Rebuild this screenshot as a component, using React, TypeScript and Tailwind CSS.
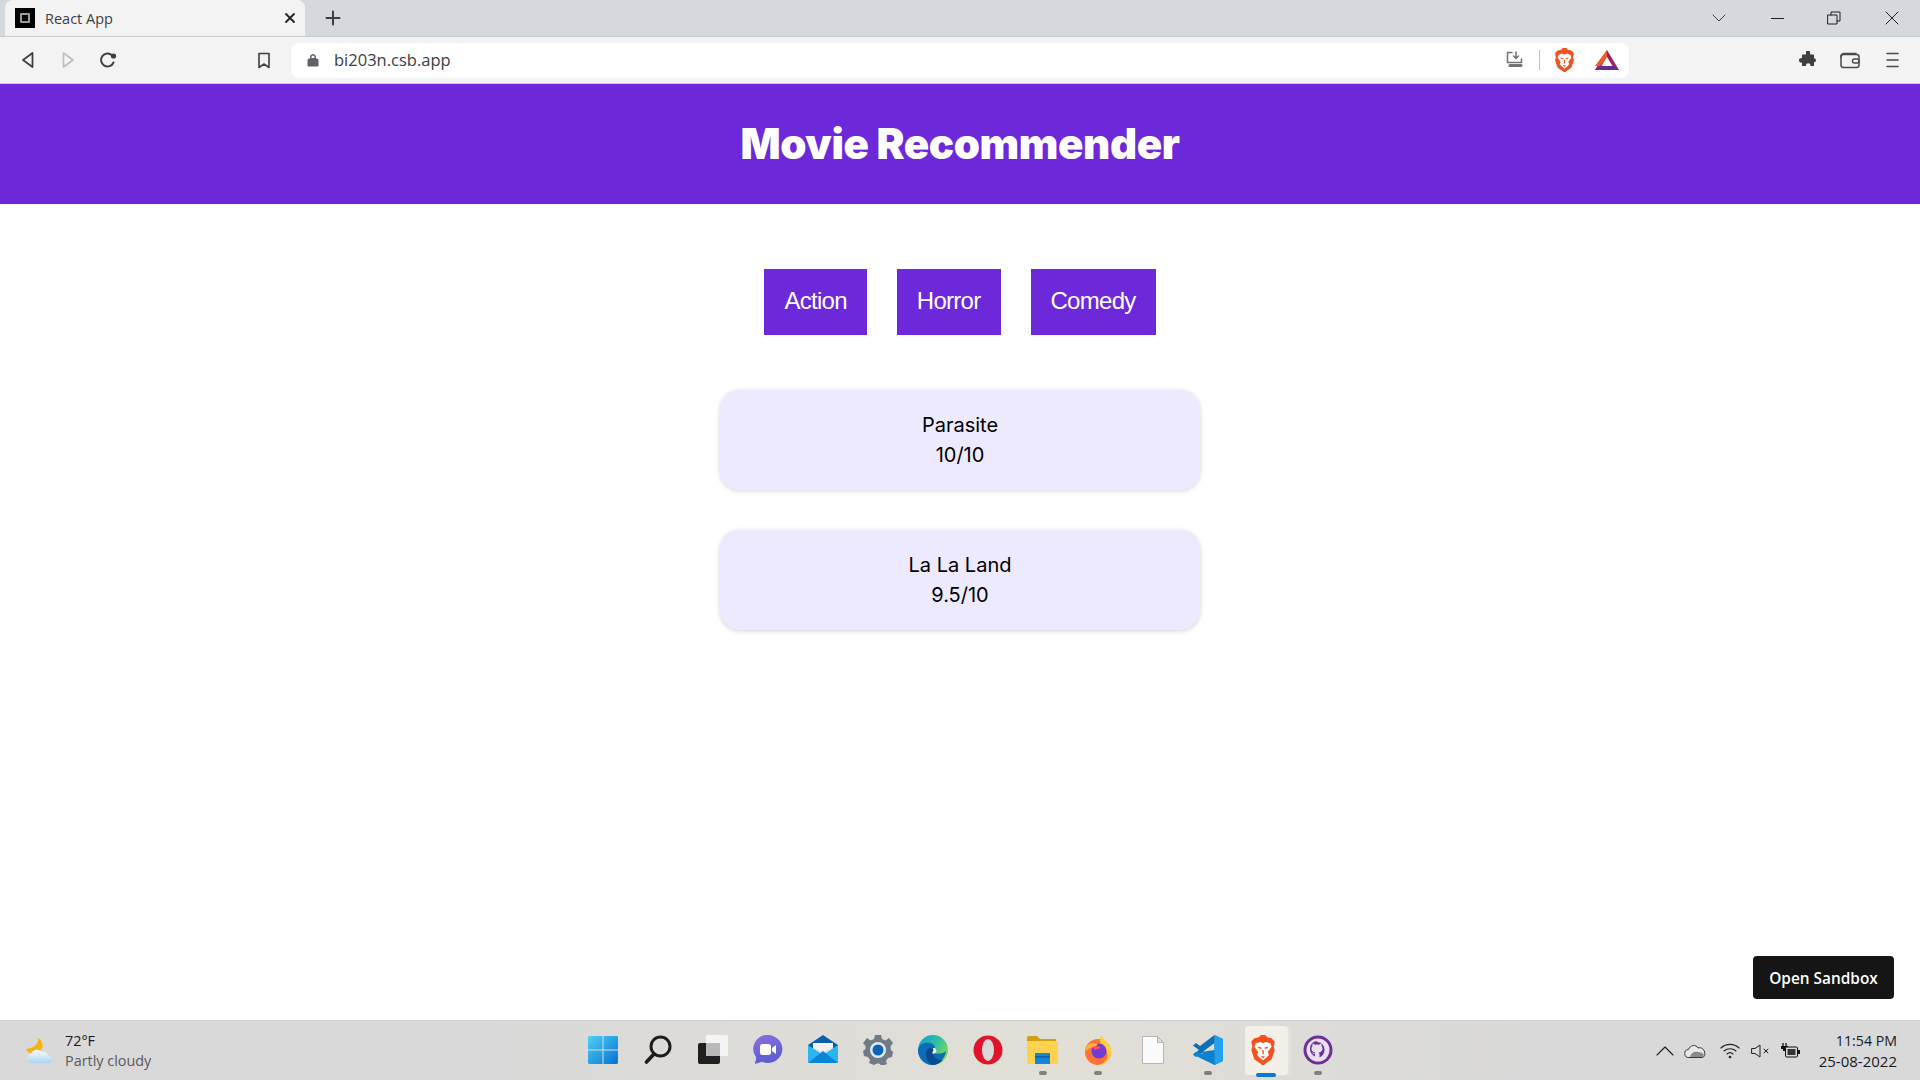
import type { ReactNode } from "react";

const purple = "bg-[#6d28d9]";

// Toolbar / taskbar icons are drawn by hand, the packages have none of these brand marks
function BraveLogo({ size }: { size: number }) {
  return (
    <svg width={size} height={size * 1.15} viewBox="0 0 24 28">
      <path d="M4 3l4-1 2-2h4l2 2 4 1 3 3-1 5 1 3-3 9-6 4-1 1h-2l-1-1-6-4-3-9 1-3-1-5z" fill="#f4511e" />
      <path d="M5 8l4-1.500 3 1 3-1L19 8l1 3-3.500 5 1 3L12 24l-5.500-5 1-3L4 11z" fill="#fff" />
      <path d="M10 20h4l-2 2z" fill="#f4511e" />
      <path d="M7.500 11.500l3 1M16.500 11.500l-3 1M12 14v4" stroke="#f4511e" strokeWidth="1.3" />
    </svg>
  );
}

function Triangle() {
  return (
    <svg width="24" height="20" viewBox="0 0 24 20">
      <path d="M12 0l12 20H0z" fill="#9e1f63" />
      <path d="M12 0v9l-7 7H0z" fill="#f15a24" />
      <path d="M5 16h14l5 4H0z" fill="#662d91" />
      <path d="M12 7l5.500 9h-11z" fill="#fff" />
    </svg>
  );
}

function ChromeStroke({ children, w = 20, h = 20, box = "0 0 20 20", color = "#3c4043", sw = 1.6 }: { children: ReactNode; w?: number; h?: number; box?: string; color?: string; sw?: number }) {
  return (
    <svg width={w} height={h} viewBox={box} fill="none" stroke={color} strokeWidth={sw} strokeLinecap="round" strokeLinejoin="round">
      {children}
    </svg>
  );
}

function BrowserChrome() {
  return (
    <div className="shrink-0 font-['Open_Sans',sans-serif]">
      {/* tab strip */}
      <div className="flex h-[37px] items-end border-b border-[#c9ccd0] bg-[#d5d8dc] pl-[5px]">
        <div className="flex h-[36px] w-[300px] items-center rounded-t-lg bg-[#f3f3f3] pl-[10px] pr-[8px]">
          <div className="flex h-5 w-5 items-center justify-center bg-black">
            <div className="h-[10px] w-[10px] rounded-[1px] border-2 border-[#9a9a9a]" />
          </div>
          <span className="ml-[10px] flex-1 pt-[2px] text-[14.5px] text-[#3c4043]">React App</span>
          <ChromeStroke w={14} h={14} box="0 0 14 14" color="#202124" sw={1.8}>
            <path d="M3 3l8 8M11 3l-8 8" />
          </ChromeStroke>
        </div>
        <div className="flex h-[36px] items-center pl-[20px]">
          <ChromeStroke w={16} h={16} box="0 0 16 16" sw={2}>
            <path d="M8 1.500v13M1.500 8h13" />
          </ChromeStroke>
        </div>
        <div className="ml-auto flex h-[36px] items-center">
          <div className="flex w-[50px] justify-center">
            <ChromeStroke w={14} h={8} box="0 0 14 8" sw={1}>
              <path d="M1 1l6 6 6-6" />
            </ChromeStroke>
          </div>
          <div className="ml-[27px] h-px w-[13px] bg-[#202124]" />
          <div className="ml-[43px]">
            <ChromeStroke w={14} h={14} box="0 0 14 14" color="#202124" sw={1}>
              <path d="M1 4h9v9H1zM4 4V1h9v9h-3" />
            </ChromeStroke>
          </div>
          <div className="ml-[44px] mr-[21px]">
            <ChromeStroke w={14} h={14} box="0 0 14 14" color="#202124" sw={1}>
              <path d="M1 1l12 12M13 1L1 13" />
            </ChromeStroke>
          </div>
        </div>
      </div>
      {/* address row */}
      <div className="flex h-[47px] items-center border-b border-[#d0d0d0] bg-[#f3f3f3]">
        <div className="flex w-[291px] items-center pl-[20px]">
          <ChromeStroke w={16} h={18} box="0 0 16 18" sw={1.8}>
            <path d="M12.500 2L3 9l9.500 7z" />
          </ChromeStroke>
          <div className="ml-[24px]">
            <ChromeStroke w={16} h={18} box="0 0 16 18" color="#bdbdbd" sw={1.6}>
              <path d="M3.500 2L13 9l-9.500 7z" />
            </ChromeStroke>
          </div>
          <div className="ml-[22px]">
            <ChromeStroke w={20} h={20} box="0 0 20 20" sw={2}>
              <path d="M15.500 12.500A6.500 6.500 0 1 1 14 5.200" />
              <circle cx="15.500" cy="6" r="1.600" fill="#3c4043" />
            </ChromeStroke>
          </div>
          <div className="ml-auto mr-[20px]">
            <ChromeStroke w={14} h={17} box="0 0 14 17" sw={1.6}>
              <path d="M2 1.500h10v14l-5-3.500-5 3.500z" />
            </ChromeStroke>
          </div>
        </div>
        <div className="flex h-[35px] w-[1338px] items-center rounded-lg bg-white pl-[16px] pr-[10px]">
          <svg width="12" height="14" viewBox="0 0 12 14">
            <path d="M2 6h8a1 1 0 0 1 1 1v6H1V7a1 1 0 0 1 1-1zM3.500 6V4a2.500 2.500 0 0 1 5 0v2" fill="#5f6368" stroke="#5f6368" />
            <path d="M4.500 5V4a1.500 1.500 0 0 1 3 0v1z" fill="#fff" />
          </svg>
          <span className="ml-[15px] flex-1 text-[16.5px] text-[#3c4043]">bi203n.csb.app</span>
          <ChromeStroke w={19} h={18} box="0 0 19 18" color="#6f7276" sw={1.5}>
            <path d="M6 1.500H1.500v10h14V8M10 1v6M7.500 5L10 7.500 12.500 5" />
            <path d="M4 14.500h11" strokeWidth="3" />
          </ChromeStroke>
          <div className="ml-[14px] mr-[14px] h-[20px] w-px bg-[#c4c4c4]" />
          <BraveLogo size={21} />
          <div className="ml-[20px]">
            <Triangle />
          </div>
        </div>
        <div className="flex flex-1 items-center pl-[170px]">
          <svg width="18" height="18" viewBox="0 0 18 18">
            <path d="M7 1a2 2 0 0 1 4 0l.3 2.500H15v3.700a2 2 0 1 1 0 4V15h-3.600a2.200 2.200 0 1 0-4.300 0H3v-3.500a2.300 2.300 0 1 1 0-4.300V3.500h4z" fill="#3c4043" />
          </svg>
          <div className="ml-[23px]">
            <ChromeStroke w={20} h={17} box="0 0 20 17" color="#4a4a4a" sw={1.5}>
              <rect x="1" y="2.500" width="18" height="13" rx="2.500" />
              <path d="M1 5a3 3 0 0 1 3-3.500h12" />
              <rect x="12.500" y="7" width="6.500" height="4" rx="2" />
            </ChromeStroke>
          </div>
          <div className="ml-[26px]">
            <ChromeStroke w={13} h={16} box="0 0 13 16" color="#4a4a4a" sw={1.5}>
              <path d="M1 1.500h11M1 8h11M1 14.500h11" />
            </ChromeStroke>
          </div>
        </div>
      </div>
    </div>
  );
}

const movies = [
  { name: "Parasite", rating: "10/10" },
  { name: "La La Land", rating: "9.5/10" },
];

function Recommender() {
  return (
    <div className="relative flex-1 bg-white text-black">
      <header className={`flex h-[120px] items-center justify-center ${purple}`}>
        <h1 className="font-['Inter',sans-serif] text-[42px] leading-[60px] font-black tracking-[-0.4px] text-white">
          Movie Recommender
        </h1>
      </header>

      <div className="mt-[65px] flex justify-center gap-[30px]">
        {["Action", "Horror", "Comedy"].map((genre) => (
          <button
            key={genre}
            className={`h-[66px] px-[20px] pb-[2px] font-['Liberation_Sans',sans-serif] text-[24px] tracking-[-0.72px] text-white ${purple}`}
          >
            {genre}
          </button>
        ))}
      </div>

      <div className="mt-[55px] flex flex-col items-center gap-[40px]">
        {movies.map((movie) => (
          <div
            key={movie.name}
            className="flex h-[100px] w-[480px] flex-col items-center justify-center rounded-[20px] bg-[#ede9fe] font-['Inter',sans-serif] text-[20px] leading-[30px] shadow-[0_1px_5px_rgba(0,0,0,0.18)]"
          >
            <div>{movie.name}</div>
            <div>{movie.rating}</div>
          </div>
        ))}
      </div>

      <button className="absolute right-[26px] bottom-[21px] h-[43px] w-[141px] rounded-[4px] bg-[#151515] pt-[2px] font-['Open_Sans',sans-serif] text-[15.4px] font-semibold text-white">
        Open Sandbox
      </button>
    </div>
  );
}

type TaskIcon = { id: string; running?: boolean; active?: boolean; icon: ReactNode };

const taskIcons: TaskIcon[] = [
  {
    id: "start",
    icon: (
      <svg width="30" height="30" viewBox="0 0 30 30">
        <defs>
          <linearGradient id="win" x1="0" y1="0" x2="1" y2="1">
            <stop offset="0" stopColor="#4fd0f8" />
            <stop offset="1" stopColor="#0672d0" />
          </linearGradient>
        </defs>
        <path d="M1 1h13.500v13.500H0V2zM15.500 1H29l1 1v12.500H15.500zM0 15.500h14.500V29H1l-1-1zM15.500 15.500H30V28l-1 1H15.500z" fill="url(#win)" />
      </svg>
    ),
  },
  {
    id: "search",
    icon: (
      <svg width="28" height="30" viewBox="0 0 28 30" fill="none" stroke="#1d1d1d" strokeLinecap="round">
        <circle cx="16.500" cy="11.500" r="9.500" strokeWidth="3" />
        <path d="M10 19l-7.500 8" strokeWidth="3.600" />
      </svg>
    ),
  },
  {
    id: "taskview",
    icon: (
      <svg width="30" height="30" viewBox="0 0 30 30">
        <rect x="0" y="8" width="22" height="21" rx="2" fill="#1f1f1f" />
        <rect x="8" y="0" width="22" height="21" rx="1" fill="#f4f4f4" />
        <rect x="8" y="8" width="14" height="13" fill="#b9b9b9" />
      </svg>
    ),
  },
  {
    id: "chat",
    icon: (
      <svg width="30" height="30" viewBox="0 0 30 30">
        <defs>
          <linearGradient id="chat" x1="0" y1="0" x2="0.3" y2="1">
            <stop offset="0" stopColor="#8f6ee0" />
            <stop offset="1" stopColor="#5a5fcf" />
          </linearGradient>
        </defs>
        <path d="M15 0a14.500 14 0 1 1-6 26.800L2 29l1.200-6.500A14 14 0 0 1 15 0z" fill="url(#chat)" />
        <rect x="7" y="9" width="11" height="11" rx="2.500" fill="#fff" />
        <path d="M19 13l4-3v9l-4-3z" fill="#fff" />
      </svg>
    ),
  },
  {
    id: "mail",
    icon: (
      <svg width="30" height="30" viewBox="0 0 30 30">
        <path d="M0 10L15 0l15 10v3H0z" fill="#0f5fa8" />
        <path d="M5 8h20v5L15 17 5 13z" fill="#f2f2f2" />
        <path d="M0 10l15 10 15-10v17l-1 1H1l-1-1z" fill="#29b6ee" />
        <path d="M0 28l15-12 15 12z" fill="#0a86d8" />
      </svg>
    ),
  },
  {
    id: "settings",
    icon: (
      <svg width="30" height="30" viewBox="0 0 30 30">
        <path
          d="M12 0h6l1 4 3.500 1.500L26 3l4 5-2.500 3.500.5 3.500 2 2-1 5-4 1-2 3 1 3-5 2-3-2.500h-2L11 30l-5-2 1-3-2-3-4-1-1-5 2.500-2V11L0 8l4-5 3.500 2.500L11 4z"
          fill="#6f7c88"
        />
        <circle cx="15" cy="15" r="8" fill="#e4e8ec" />
        <circle cx="15" cy="15" r="5.500" fill="#0b63b5" />
      </svg>
    ),
  },
  {
    id: "edge",
    icon: (
      <svg width="30" height="30" viewBox="0 0 30 30">
        <defs>
          <linearGradient id="edge" x1="0" y1="0" x2="1" y2="0.6">
            <stop offset="0" stopColor="#0b9bd8" />
            <stop offset="0.6" stopColor="#35c1a0" />
            <stop offset="1" stopColor="#7ed957" />
          </linearGradient>
        </defs>
        <circle cx="15" cy="15" r="15" fill="url(#edge)" />
        <path d="M0 15c1-6 7-8 12-7s7 6 3 9c3 3 10 2 13-1-1 8-7 14-14 14C6 30 0 23 0 15z" fill="#0c6cb8" />
        <path d="M8 18c0-4 4-6 7-4s2 5 0 6c2 3 5 6 10 5-3 3-7 5-11 5-4-2-6-7-6-12z" fill="#0a4a8f" />
        <path d="M15 13c3 0 4 2 3 4-1 2-3 2-4 1 1-1 2-3 1-5z" fill="#fff" />
      </svg>
    ),
  },
  {
    id: "opera",
    icon: (
      <svg width="30" height="30" viewBox="0 0 30 30">
        <circle cx="15" cy="15" r="14.500" fill="#e0132a" />
        <ellipse cx="15" cy="15" rx="6" ry="11" fill="#d9d9d9" />
      </svg>
    ),
  },
  {
    id: "files",
    running: true,
    icon: (
      <svg width="31" height="28" viewBox="0 0 31 28">
        <path d="M0 2a2 2 0 0 1 2-2h8l3 3h16v5H0z" fill="#d19f12" />
        <path d="M0 5h31v21a2 2 0 0 1-2 2H2a2 2 0 0 1-2-2z" fill="#fcd24f" />
        <path d="M8 17h15v11H8z" fill="#1387d6" />
        <path d="M8 20h15v1.500H8z" fill="#0d5ea3" />
      </svg>
    ),
  },
  {
    id: "firefox",
    running: true,
    icon: (
      <svg width="30" height="30" viewBox="0 0 30 30">
        <circle cx="15" cy="17" r="13" fill="#ff7139" />
        <path d="M18 0c2 5 9 8 10 14 2 8-4 16-13 16 8-2 11-7 9-13-1-4-6-6-7-10 0-2 0-5 1-7z" fill="#ffcd3c" />
        <circle cx="16" cy="16" r="7.500" fill="#6f3bd0" />
        <path d="M3 12c3-4 8-5 12-3l-3 3c-3 0-6 1-9 4z" fill="#ffb03c" />
        <path d="M9 12c3-2 8-1 9 1l-6 2z" fill="#ff4f5e" />
      </svg>
    ),
  },
  {
    id: "file",
    icon: (
      <svg width="22" height="28" viewBox="0 0 22 28">
        <path d="M.500.500h15l6 6v21H.500z" fill="#fbfbfb" stroke="#b5b5b5" />
        <path d="M15.500.500v6h6z" fill="#dedede" stroke="#b5b5b5" />
      </svg>
    ),
  },
  {
    id: "vscode",
    running: true,
    icon: (
      <svg width="30" height="30" viewBox="0 0 30 30">
        <path d="M21.500 0L30 4v22l-8.500 4L8 17l13.500-2z" fill="#0f7fca" />
        <path d="M21.500 0L30 4v22l-8.500 4z" fill="#22a2ec" />
        <path d="M21.500 0v8L7 19l-4 3-3-2.500L6 15 0 10.500 3 8l4 3z" fill="#0a6fb4" />
        <path d="M21.500 22v8L0 19.500 3 17z" fill="#0d82cf" />
      </svg>
    ),
  },
  { id: "brave", active: true, icon: <BraveLogo size={26} /> },
  {
    id: "github",
    running: true,
    icon: (
      <svg width="30" height="30" viewBox="0 0 30 30">
        <circle cx="15" cy="15" r="14.500" fill="#6d2f9c" />
        <circle cx="15" cy="15" r="11.500" fill="#e8e0ef" />
        <path
          d="M15 6c-5 0-8 3.500-8 8 0 3.500 2 6.300 5 7.500v-2.500c-2 .4-2.700-.8-3-1.500 1 .2 1.600 1 2.500 1.200.2-.7.500-1.100.8-1.300-3-.5-3.800-2-3.800-4 0-1 .3-1.800 1-2.500-.2-.5-.2-1.500.2-2.200 1 0 1.800.6 2.300 1a8 8 0 0 1 4 0c.5-.4 1.300-1 2.300-1 .4.700.4 1.700.2 2.200.7.700 1 1.500 1 2.500 0 2-.8 3.500-3.800 4 .4.400.8 1 .8 2v3.100c3-1.200 5-4 5-7.500 0-4.500-3-8-8-8z"
          fill="#6d2f9c"
        />
      </svg>
    ),
  },
];

function Taskbar() {
  return (
    <div className="flex h-[60px] shrink-0 border-t border-[#cfcfcf] bg-linear-to-r from-[#d9d9d9] from-25% via-[#e2dfd6] via-55% to-[#d9d9d9] to-80% font-['Open_Sans',sans-serif]">
      {/* weather */}
      <div className="flex w-[575px] items-center pl-[26px]">
        <svg width="27" height="26" viewBox="0 0 27 26">
          <defs>
            <linearGradient id="cloud" x1="0" y1="0" x2="0" y2="1">
              <stop offset="0" stopColor="#fdfdfd" />
              <stop offset="1" stopColor="#a9d4f2" />
            </linearGradient>
          </defs>
          <path d="M12 0c1 5-3 10-12 11 2 6 12 7 15 1 3-4 2-9-3-12z" fill="#f5b414" />
          <path d="M6 25a4.500 4.500 0 0 1-1-9c1-4 8-6 11-2 3-1 6 1 6 4a3.500 3.500 0 0 1 1 7z" fill="url(#cloud)" />
        </svg>
        <div className="ml-[12px] text-[14.4px] leading-[20px]">
          <div className="text-[#1a1a1a]">72°F</div>
          <div className="text-[#5a5a5a]">Partly cloudy</div>
        </div>
      </div>

      {/* pinned apps */}
      <div className="flex">
        {taskIcons.map((t) => (
          <div key={t.id} className="relative flex h-full w-[55px] items-center justify-center">
            {t.active && (
              <div className="absolute top-[5px] left-[10px] h-[49px] w-[43px] rounded-[4px] bg-[#f3f0ea] shadow-[3px_0_0_#e6e2da]" />
            )}
            <div className="relative -mt-px flex items-center justify-center">{t.icon}</div>
            {t.running && <div className="absolute bottom-[5px] h-[4px] w-[8px] rounded-full bg-[#808080]" />}
            {t.active && <div className="absolute bottom-[3px] left-[21px] h-[4px] w-[20px] rounded-full bg-[#0a78d4]" />}
          </div>
        ))}
      </div>

      {/* tray */}
      <div className="flex flex-1 items-center">
        <div className="ml-[311px]">
          <ChromeStroke w={18} h={10} box="0 0 18 10" color="#202020" sw={1.1}>
            <path d="M1 9l8-8 8 8" />
          </ChromeStroke>
        </div>
        <div className="ml-[10px]">
          <svg width="22" height="14" viewBox="0 0 22 14">
            <path d="M5 13.500a4 4 0 0 1-.5-8C6 1 12 0 14 4c3-1 6 1 6.500 4 1 2 0 5.500-2.500 5.500z" fill="#e8e8e8" stroke="#3a3a3a" />
            <path d="M6 13c1-4 4-6 8-5 3 0 5 1 6 3-1 2-2 2-3 2z" fill="#8a8a8a" />
          </svg>
        </div>
        <div className="ml-[14px]">
          <ChromeStroke w={20} h={16} box="0 0 20 16" color="#202020" sw={1.1}>
            <path d="M1 5a13 13 0 0 1 18 0M4 8a9 9 0 0 1 12 0M7 11a4.500 4.500 0 0 1 6 0" />
            <circle cx="10" cy="14" r=".8" fill="#202020" />
          </ChromeStroke>
        </div>
        <div className="ml-[11px]">
          <ChromeStroke w={20} h={14} box="0 0 20 14" color="#202020" sw={1}>
            <path d="M1 4.500h3L9 1v12L4 9.500H1zM13 5l4 4M17 5l-4 4" />
          </ChromeStroke>
        </div>
        <div className="ml-[10px]">
          <svg width="20" height="16" viewBox="0 0 20 16">
            <path d="M2 0v3M5 0v3" stroke="#111" strokeWidth="1.300" />
            <path d="M0 3h7v3H5v2H2V6H0z" fill="#111" />
            <rect x="4.500" y="4" width="12" height="10" rx="1" fill="#d9d9d9" stroke="#111" />
            <rect x="6.500" y="6" width="8" height="6" fill="#333" />
            <rect x="17" y="7" width="2" height="4" fill="#111" />
          </svg>
        </div>
        <div className="ml-auto pr-[23px] text-right leading-[20px] text-[#1a1a1a]">
          <div className="text-[14.2px]">11:54 PM</div>
          <div className="text-[15px]">25-08-2022</div>
        </div>
      </div>
    </div>
  );
}

export default function App() {
  return (
    <div className="flex h-screen w-full flex-col overflow-hidden">
      <BrowserChrome />
      <Recommender />
      <Taskbar />
    </div>
  );
}
